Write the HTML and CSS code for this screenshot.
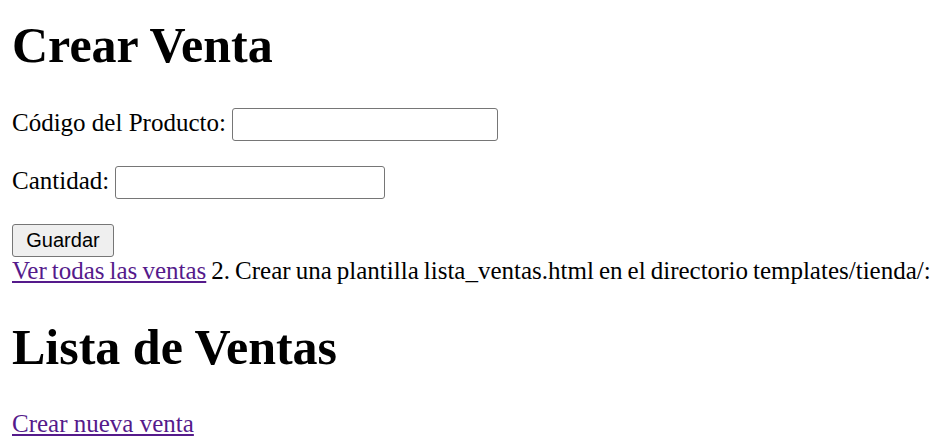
FILE: index.html
```html
<!DOCTYPE html>
<html lang="es">
<head>
<meta charset="utf-8">
<title>Crear Venta</title>
<link rel="stylesheet" href="styles.css">
</head>
<body>
<h1 class="title first">Crear Venta</h1>
<form class="form" method="post">
  <p class="field"><label for="id_codigo">Código del Producto:</label> <input type="text" id="id_codigo" class="input input-codigo"></p>
  <p class="field"><label for="id_cantidad">Cantidad:</label> <input type="number" id="id_cantidad" class="input input-cantidad"></p>
  <button type="submit" class="button">Guardar</button>
</form>
<div class="line"><a href="#" class="link">Ver todas las ventas</a> 2. Crear una plantilla lista_ventas.html en el directorio templates/tienda/:</div>
<h1 class="title">Lista de Ventas</h1>
<a href="#" class="link">Crear nueva venta</a>
</body>
</html>
```
FILE: styles.css
```css
html {
  background: #ffffff;
  overflow: hidden;
}
body {
  margin: 0 12px;
  font-family: "Liberation Serif", "Times New Roman", serif;
  font-size: 25px;
  color: #000000;
}
.title {
  font-size: 50px;
  font-weight: bold;
  margin: 33.5px 0;
}
.title.first {
  margin-top: 16px;
}
.form {
  margin: 0;
}
.field {
  margin: 25px 0;
}
.line {
  white-space: nowrap;
  word-spacing: -1.2px;
}
.input {
  box-sizing: border-box;
  height: 33px;
  font-family: Arial, "Liberation Sans", sans-serif;
  font-size: 20px;
  padding: 1px 3px;
  border: 1px solid #767676;
  border-radius: 3px;
  background: #ffffff;
  vertical-align: baseline;
}
.input-codigo {
  width: 266px;
}
.input-cantidad {
  width: 270px;
  -moz-appearance: textfield;
}
.input-cantidad::-webkit-outer-spin-button,
.input-cantidad::-webkit-inner-spin-button {
  -webkit-appearance: none;
  margin: 0;
}
.button {
  box-sizing: border-box;
  font-family: Arial, "Liberation Sans", sans-serif;
  font-size: 20px;
  width: 102px;
  height: 33px;
  padding: 1px 6px;
  border: 1px solid #767676;
  border-radius: 3px;
  background: #efefef;
  color: #000000;
}
.link {
  color: #551a8b;
  text-decoration: underline;
}
```
